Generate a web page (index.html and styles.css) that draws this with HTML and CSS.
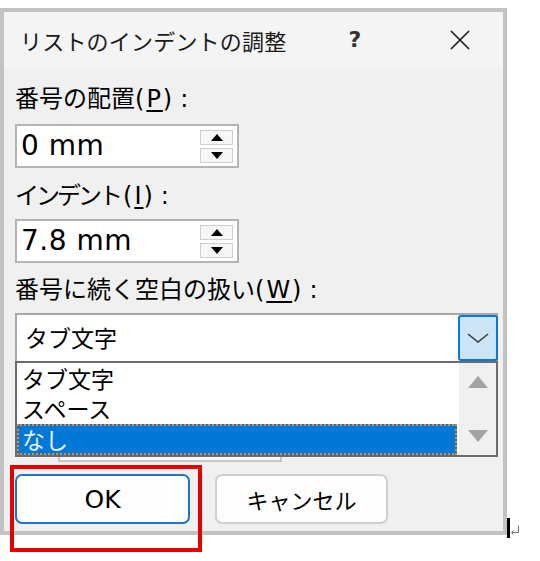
FILE: index.html
```html
<!DOCTYPE html>
<html lang="ja">
<head>
<meta charset="utf-8">
<title>リストのインデントの調整</title>
<link rel="stylesheet" href="styles.css">
</head>
<body>
<div class="dialog">
  <div class="titlebar">
    <span class="title">リストのインデントの調整</span>
    <span class="help">?</span>
    <span class="close"><svg width="22" height="22" viewBox="0 0 22 22"><path d="M2 2 L20 20 M20 2 L2 20" stroke="#1e1e1e" stroke-width="1.7" fill="none"/></svg></span>
  </div>
  <div class="content">
    <div class="label l1">番号の配置<span class="acc">(<u>P</u>)</span><span class="colon">:</span></div>
    <div class="spin s1">
      <span class="val">0 mm</span>
      <div class="spinbtns">
        <span class="sb"><svg width="12" height="7" viewBox="0 0 12 7"><polygon points="6,0 12,7 0,7" fill="#000"/></svg></span>
        <span class="sb"><svg width="12" height="7" viewBox="0 0 12 7"><polygon points="0,0 12,0 6,7" fill="#000"/></svg></span>
      </div>
    </div>
    <div class="label l2"><span class="kana">インデント</span><span class="acc">(<u>I</u>)</span><span class="colon">:</span></div>
    <div class="spin s2">
      <span class="val">7.8 mm</span>
      <div class="spinbtns">
        <span class="sb"><svg width="12" height="7" viewBox="0 0 12 7"><polygon points="6,0 12,7 0,7" fill="#000"/></svg></span>
        <span class="sb"><svg width="12" height="7" viewBox="0 0 12 7"><polygon points="0,0 12,0 6,7" fill="#000"/></svg></span>
      </div>
    </div>
    <div class="label l3">番号に続く空白の扱い<span class="acc">(<u>W</u>)</span><span class="colon">:</span></div>
    <div class="combo-wrap">
      <div class="combo">
        <span class="combo-val">タブ文字</span>
        <span class="drop"><svg width="22" height="10" viewBox="0 0 22 10"><polyline points="1,1 11,9 21,1" stroke="#3c3c3c" stroke-width="1.6" fill="none"/></svg></span>
      </div>
      <div class="listbox">
        <div class="items">
          <div class="item">タブ文字</div>
          <div class="item">スペース</div>
          <div class="item sel">なし</div>
        </div>
        <div class="vscroll">
          <svg width="20" height="12" viewBox="0 0 20 12"><polygon points="10,0 20,12 0,12" fill="#a3a3a3"/></svg>
          <svg width="20" height="12" viewBox="0 0 20 12"><polygon points="0,0 20,0 10,12" fill="#a3a3a3"/></svg>
        </div>
      </div>
    </div>
    <div class="under-box"></div>
    <div class="buttons">
      <button class="btn ok">OK</button>
      <button class="btn cancel">キャンセル</button>
    </div>
  </div>
</div>
<div class="annot"></div>
<div class="caret"></div>
<svg class="ret" width="10" height="10" viewBox="0 0 10 10"><path d="M8.5 0.5 V7.5 H1.5 M3.5 5.5 L1.5 7.5 L3.5 9.5" stroke="#777" stroke-width="1" fill="none"/></svg>
</body>
</html>
```

FILE: styles.css
```css
html, body {
  margin: 0;
  padding: 0;
  background: #ffffff;
}

body {
  position: relative;
  width: 540px;
  height: 561px;
  overflow: hidden;
  font-family: "DejaVu Sans", "Noto Sans CJK JP", sans-serif;
  color: #000;
}

.dialog {
  margin-top: 8px;
  width: 507px;
  height: 527px;
  box-sizing: border-box;
  border: 4px solid #c2c2c2;
  background: #f0f0f0;
  display: flex;
  flex-direction: column;
}

.titlebar {
  height: 56px;
  flex: none;
  background: #f4f4f4;
  display: flex;
  align-items: center;
  padding-left: 16px;
}

.title {
  flex: 1;
  font-family: "Noto Sans CJK JP", sans-serif;
  font-size: 22px;
  line-height: 30px;
  color: #1a1a1a;
  letter-spacing: 0.2px;
}

.help {
  width: 24px;
  text-align: center;
  font-family: "DejaVu Sans", sans-serif;
  font-size: 22px;
  font-weight: bold;
  line-height: 30px;
  color: #333;
}

.close {
  width: 24px;
  height: 22px;
  margin-left: 81px;
  margin-right: 31px;
  display: flex;
  justify-content: center;
}

.content {
  padding: 0 5px 0 11px;
  display: flex;
  flex-direction: column;
  align-items: flex-start;
}

.label {
  font-size: 24px;
  line-height: 30px;
  height: 30px;
  white-space: nowrap;
}

.label .acc {
  letter-spacing: 2px;
}

.label .colon {
  margin-left: 6px;
}

.label u {
  text-decoration-thickness: 2px;
  text-underline-offset: 3px;
}

.l1 { margin-top: 16px; }
.l2 { margin-top: 13px; }
.l3 { margin-top: 12px; }

.l2 .kana { letter-spacing: -3px; margin-right: 3px; }

.spin {
  width: 224px;
  height: 44px;
  box-sizing: border-box;
  border: 2px solid #b4b4b4;
  background: #fff;
  display: flex;
  align-items: center;
}

.s1 { margin-top: 10px; }
.s2 { margin-top: 8px; }

.val {
  flex: 1;
  padding-left: 4px;
  font-family: "DejaVu Sans", sans-serif;
  font-size: 28px;
  line-height: 34px;
  letter-spacing: 0.5px;
}

.spinbtns {
  display: flex;
  flex-direction: column;
  gap: 3px;
  margin-right: 4px;
}

.sb {
  width: 33px;
  height: 15px;
  box-sizing: border-box;
  border: 1.5px solid #cfcfcf;
  background: #f7f7f7;
  display: flex;
  align-items: center;
  justify-content: center;
}

.combo-wrap {
  position: relative;
  margin-top: 8px;
  width: 483px;
}

.combo {
  height: 48px;
  box-sizing: border-box;
  border: 2px solid #a9a9a9;
  border-bottom: none;
  background: #fff;
  display: flex;
  align-items: stretch;
}

.combo-val {
  flex: 1;
  padding-left: 8px;
  font-family: "Noto Sans CJK JP", sans-serif;
  font-size: 23px;
  line-height: 44px;
}

.drop {
  width: 40px;
  margin-right: -2px;
  box-sizing: border-box;
  border: 2px solid #0a78d2;
  border-radius: 3px;
  background: #cde4f7;
  display: flex;
  align-items: center;
  justify-content: center;
}

.listbox {
  position: absolute;
  left: 0;
  top: 100%;
  width: 483px;
  height: 96px;
  box-sizing: border-box;
  border: 2px solid #6b6b6b;
  background: #fff;
  display: flex;
  z-index: 2;
}

.items {
  flex: 1;
  display: grid;
  grid-template-rows: 30px 31px 31px;
}

.item {
  padding-left: 5px;
  font-family: "Noto Sans CJK JP", sans-serif;
  font-size: 23px;
  line-height: 30px;
  color: #000;
}

.item.sel {
  background: #0078d7;
  color: #eaf2ff;
  outline: 2px dotted #ee8a2c;
  outline-offset: -2px;
  margin-right: 2px;
}

.vscroll {
  width: 37px;
  background: #f0f0f0;
  display: flex;
  flex-direction: column;
  align-items: center;
  justify-content: space-between;
  padding: 13px 0 13px;
  box-sizing: border-box;
}

.under-box {
  margin-top: 71px;
  margin-left: 43px;
  width: 224px;
  height: 30px;
  box-sizing: border-box;
  border: 2px solid #c6c6c6;
  background: #f7f7f7;
}

.buttons {
  margin-top: 12px;
  display: flex;
  gap: 25px;
}

.btn {
  height: 50px;
  box-sizing: border-box;
  border: 2px solid #cfcfcf;
  border-radius: 7px;
  background: #fdfdfd;
  color: #000;
  padding: 0;
  font-family: "Noto Sans CJK JP", sans-serif;
  font-size: 22px;
}

.btn.ok {
  width: 175px;
  border-color: #1f74c8;
  font-family: "DejaVu Sans", sans-serif;
  font-size: 25px;
}

.btn.cancel {
  width: 173px;
}

.annot {
  position: absolute;
  left: 10px;
  top: 465px;
  width: 192px;
  height: 87px;
  box-sizing: border-box;
  border: 4px solid #e60000;
}

.caret {
  position: absolute;
  left: 507px;
  top: 518px;
  width: 3px;
  height: 20px;
  background: #000;
}

.ret {
  position: absolute;
  left: 510px;
  top: 525px;
}
```
